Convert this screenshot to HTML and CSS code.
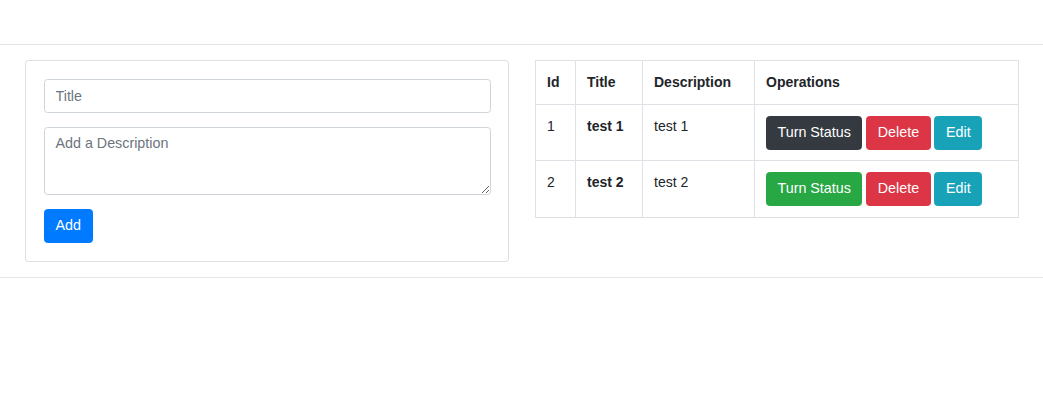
FILE: index.html
```html
<!DOCTYPE html>
<html lang="en">
<head>
<meta charset="utf-8">
<title>Todo</title>
<link rel="stylesheet" href="styles.css">
</head>
<body>
<header class="topbar"></header>
<hr class="divider">
<main class="layout">
  <section class="card">
    <form class="card-body">
      <input class="form-control" type="text" placeholder="Title">
      <textarea class="form-control form-textarea" placeholder="Add a Description"></textarea>
      <button type="button" class="btn btn-primary">Add</button>
    </form>
  </section>
  <section class="table-wrap">
    <table class="table">
      <colgroup>
        <col class="col-id">
        <col class="col-title">
        <col class="col-desc">
        <col>
      </colgroup>
      <thead>
        <tr><th>Id</th><th>Title</th><th>Description</th><th>Operations</th></tr>
      </thead>
      <tbody>
        <tr>
          <td>1</td>
          <td class="bold">test 1</td>
          <td>test 1</td>
          <td class="ops">
            <button type="button" class="btn btn-dark">Turn Status</button>
            <button type="button" class="btn btn-danger">Delete</button>
            <button type="button" class="btn btn-info">Edit</button>
          </td>
        </tr>
        <tr class="last-row">
          <td>2</td>
          <td class="bold">test 2</td>
          <td>test 2</td>
          <td class="ops">
            <button type="button" class="btn btn-success">Turn Status</button>
            <button type="button" class="btn btn-danger">Delete</button>
            <button type="button" class="btn btn-info">Edit</button>
          </td>
        </tr>
      </tbody>
    </table>
  </section>
</main>
<hr class="divider divider-bottom">
</body>
</html>
```
FILE: styles.css
```css
* { box-sizing: border-box; }
html { font-size: 14px; }
body {
  margin: 0;
  font-family: "Liberation Sans", Arial, sans-serif;
  font-size: 14px;
  line-height: 1.5;
  color: #212529;
  background: #fff;
}
.topbar { height: 30px; }
.divider {
  margin: 14px 0;
  border: 0;
  border-top: 1px solid rgba(0, 0, 0, 0.1);
  height: 0;
}
.divider-bottom { margin-top: 15px; }
.layout {
  display: flex;
  align-items: flex-start;
  gap: 26px;
  padding: 1px 0 0 25px;
}
.card {
  flex: none;
  width: 484px;
  border: 1px solid rgba(0, 0, 0, 0.125);
  border-radius: 3.5px;
}
.card-body {
  padding: 17.5px 17.5px 18.5px;
  margin: 0;
}
.form-control {
  display: block;
  width: 100%;
  height: 34px;
  padding: 5.25px 11px;
  font-family: inherit;
  font-size: 14.3px;
  line-height: 1.5;
  color: #495057;
  background: #fff;
  border: 1px solid #ced4da;
  border-radius: 3.5px;
  margin: 0 0 14px 0;
}
.form-control::placeholder { color: #6c757d; opacity: 1; }
.form-textarea {
  height: 68px;
  resize: vertical;
  margin-bottom: 14px;
}
.btn {
  display: inline-block;
  font-family: inherit;
  font-size: 14.3px;
  line-height: 21px;
  padding: 5.5px 10.5px;
  border: 1px solid transparent;
  border-radius: 3.5px;
  color: #fff;
  cursor: pointer;
  vertical-align: middle;
}
.btn-primary { background: #007bff; border-color: #007bff; padding-left: 11px; padding-right: 11px; }
.btn-dark { background: #343a40; border-color: #343a40; }
.btn-danger { background: #dc3545; border-color: #dc3545; }
.btn-info { background: #17a2b8; border-color: #17a2b8; }
.btn-success { background: #28a745; border-color: #28a745; }
.table-wrap { flex: none; width: 484px; }
.table {
  width: 484px;
  border-collapse: collapse;
  table-layout: fixed;
}
.col-id { width: 40px; }
.col-title { width: 67px; }
.col-desc { width: 112px; }
.table th, .table td {
  border: 1px solid #dee2e6;
  padding: 10.5px 11px;
  text-align: left;
  vertical-align: top;
  white-space: nowrap;
}
.table th { padding-top: 11px; padding-bottom: 11px; font-weight: bold; }
.table .last-row td { padding-bottom: 11.5px; }
.bold { font-weight: bold; }
```
